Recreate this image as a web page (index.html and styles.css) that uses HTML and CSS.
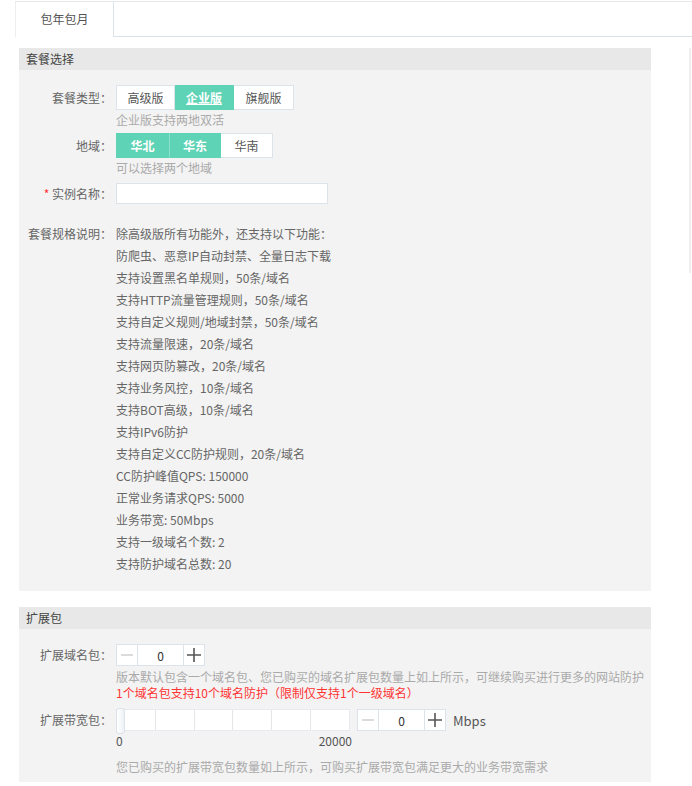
FILE: index.html
```html
<!DOCTYPE html>
<html lang="zh-CN">
<head>
  <meta charset="UTF-8">
  <title>包年包月</title>
  <link rel="stylesheet" href="styles.css">
</head>
<body>

  <div class="tabs">
    <div class="tab active">包年包月</div>
    <div class="tab-rest"></div>
  </div>

  <div class="scrollbar"></div>

  <!-- 套餐选择 -->
  <div class="section">
    <div class="section-title">套餐选择</div>
    <div class="section-body">
      <div class="row">
        <div class="label">套餐类型：</div>
        <div class="field">
          <div class="btn-group">
            <span class="btn w59">高级版</span><span class="btn w59 on link">企业版</span><span class="btn w60">旗舰版</span>
          </div>
          <div class="hint">企业版支持两地双活</div>
        </div>
      </div>

      <div class="row">
        <div class="label">地域：</div>
        <div class="field">
          <div class="btn-group">
            <span class="btn w53 on">华北</span><span class="btn w52 on">华东</span><span class="btn w52">华南</span>
          </div>
          <div class="hint">可以选择两个地域</div>
        </div>
      </div>

      <div class="row">
        <div class="label"><span class="req">*</span> 实例名称：</div>
        <div class="field">
          <input class="text-input" type="text">
        </div>
      </div>

      <div class="row spec">
        <div class="label">套餐规格说明：</div>
        <div class="field">
          <div class="spec-line">除高级版所有功能外，还支持以下功能：</div>
          <div class="spec-line">防爬虫、恶意IP自动封禁、全量日志下载</div>
          <div class="spec-line">支持设置黑名单规则，50条/域名</div>
          <div class="spec-line">支持HTTP流量管理规则，50条/域名</div>
          <div class="spec-line">支持自定义规则/地域封禁，50条/域名</div>
          <div class="spec-line">支持流量限速，20条/域名</div>
          <div class="spec-line">支持网页防篡改，20条/域名</div>
          <div class="spec-line">支持业务风控，10条/域名</div>
          <div class="spec-line">支持BOT高级，10条/域名</div>
          <div class="spec-line">支持IPv6防护</div>
          <div class="spec-line">支持自定义CC防护规则，20条/域名</div>
          <div class="spec-line">CC防护峰值QPS: 150000</div>
          <div class="spec-line">正常业务请求QPS: 5000</div>
          <div class="spec-line">业务带宽: 50Mbps</div>
          <div class="spec-line">支持一级域名个数: 2</div>
          <div class="spec-line">支持防护域名总数: 20</div>
        </div>
      </div>
    </div>
  </div>

  <!-- 扩展包 -->
  <div class="section">
    <div class="section-title">扩展包</div>
    <div class="section-body ext">
      <div class="row">
        <div class="label small">扩展域名包：</div>
        <div class="field">
          <div class="stepper">
            <span class="step minus"><svg width="12" height="12" viewBox="0 0 12 12"><path d="M0 6h12" stroke="#ccc" stroke-width="1.4"/></svg></span>
            <span class="step-val">0</span>
            <span class="step plus"><svg width="14" height="14" viewBox="0 0 14 14"><path d="M0 7h14M7 0v14" stroke="#555" stroke-width="1.6"/></svg></span>
          </div>
          <div class="hint tight first">版本默认包含一个域名包、您已购买的域名扩展包数量上如上所示，可继续购买进行更多的网站防护</div>
          <div class="hint tight red">1个域名包支持10个域名防护（限制仅支持1个一级域名）</div>
        </div>
      </div>

      <div class="row bw">
        <div class="label small">扩展带宽包：</div>
        <div class="field">
          <div class="bw-line">
            <div class="slider">
              <div class="seg"></div><div class="seg"></div><div class="seg"></div><div class="seg"></div><div class="seg"></div><div class="seg"></div>
              <div class="handle"></div>
            </div>
            <div class="stepper">
              <span class="step minus"><svg width="12" height="12" viewBox="0 0 12 12"><path d="M0 6h12" stroke="#ccc" stroke-width="1.4"/></svg></span>
              <span class="step-val">0</span>
              <span class="step plus"><svg width="14" height="14" viewBox="0 0 14 14"><path d="M0 7h14M7 0v14" stroke="#555" stroke-width="1.6"/></svg></span>
            </div>
            <span class="unit">Mbps</span>
          </div>
          <div class="scale"><span>0</span><span>20000</span></div>
          <div class="hint bottom">您已购买的扩展带宽包数量如上所示，可购买扩展带宽包满足更大的业务带宽需求</div>
        </div>
      </div>
    </div>
  </div>

</body>
</html>
```

FILE: styles.css
```css
body {
  margin: 0;
  font-family: "Noto Sans CJK SC", "Noto Sans", sans-serif;
  font-size: 12px;
  color: #666;
  background: #fff;
  position: relative;
}

.tabs {
  display: flex;
  margin: 1px 0 0 15px;
  border-top: 1px solid #e8e8e8;
  height: 35px;
}

.tab {
  width: 97px;
  border-left: 1px solid #eee;
  border-right: 1px solid #dde3ea;
  text-align: center;
  line-height: 34px;
  color: #555;
  font-size: 12px;
}

.tab-rest {
  flex: 1;
  border-bottom: 1px solid #d9e0e8;
}

.scrollbar {
  position: absolute;
  top: 48px;
  right: 1px;
  width: 2px;
  height: 225px;
  background: #eee;
}

.section {
  width: 632px;
  margin: 11px 0 0 19px;
  background: #f3f3f3;
}

.section + .section {
  margin-top: 16px;
}

.section-title {
  height: 22px;
  line-height: 22px;
  padding-left: 7px;
  background: #e8e8e8;
  color: #444;
  font-size: 12px;
}

.section-body {
  padding: 15px 0 16px;
}

.section-body.ext {
  padding-bottom: 3px;
}

.row {
  display: flex;
  margin-bottom: 3px;
}

.label {
  width: 93px;
  margin-right: 4px;
  text-align: right;
  line-height: 25px;
  white-space: nowrap;
  flex-shrink: 0;
}

.label.small {
  line-height: 22px;
}

.req {
  color: #f33;
}

.field {
  flex: 1;
}

.btn-group {
  display: flex;
}

.btn {
  box-sizing: border-box;
  height: 25px;
  line-height: 23px;
  text-align: center;
  border: 1px solid #dde3ea;
  border-left: none;
  background: #fff;
  color: #555;
}

.btn:first-child {
  border-left: 1px solid #dde3ea;
}

.btn.on {
  background: #5fd3b5;
  border-color: #5fd3b5;
  color: #fff;
  font-weight: bold;
}

.btn.on + .btn.on {
  border-left: 1px solid #8fe0cb;
}

.btn.link {
  text-decoration: underline;
}

.w59 { width: 59px; }
.w60 { width: 60px; }
.w53 { width: 53px; }
.w52 { width: 52px; }

.hint {
  line-height: 20px;
  color: #aaa;
  white-space: nowrap;
}

.hint.tight {
  line-height: 16px;
}

.hint.first {
  margin-top: 3px;
}

.hint.red {
  color: #f33;
}

.text-input {
  box-sizing: border-box;
  width: 212px;
  height: 21px;
  border: 1px solid #dde3ea;
  background: #fff;
  margin: 2px 0 0;
  outline: none;
  display: block;
}

.row.spec {
  margin-top: 17px;
  margin-bottom: 0;
}

.row.spec .label {
  line-height: 22px;
}

.spec-line {
  line-height: 22px;
  white-space: nowrap;
}

.stepper {
  display: flex;
  height: 22px;
  box-sizing: border-box;
}

.step, .step-val {
  box-sizing: border-box;
  height: 22px;
  border: 1px solid #dde3ea;
  background: #fff;
  display: flex;
  align-items: center;
  justify-content: center;
}

.step {
  width: 22px;
}

.step-val {
  width: 45px;
  border-left: none;
  border-right: none;
  color: #333;
}

.row.bw {
  margin-top: 8px;
}

.bw-line {
  display: flex;
  align-items: center;
}

.slider {
  position: relative;
  display: flex;
  width: 234px;
  height: 22px;
  box-sizing: border-box;
  border: 1px solid #e6e9ed;
  background: #fff;
  margin-right: 7px;
}

.seg {
  flex: 1;
  border-left: 1px solid #e6e6e6;
}

.seg:first-child {
  border-left: none;
}

.handle {
  position: absolute;
  left: -1px;
  top: -2px;
  width: 7px;
  height: 24px;
  border: 1px solid #dde3ea;
  border-radius: 3px;
  background: linear-gradient(to right, #fff, #eef1f5);
}

.unit {
  margin-left: 7px;
  color: #555;
  font-size: 13px;
}

.scale {
  display: flex;
  justify-content: space-between;
  width: 236px;
  line-height: 16px;
  margin-top: 2px;
  color: #555;
}

.hint.bottom {
  margin-top: 9px;
  line-height: 18px;
}
```
